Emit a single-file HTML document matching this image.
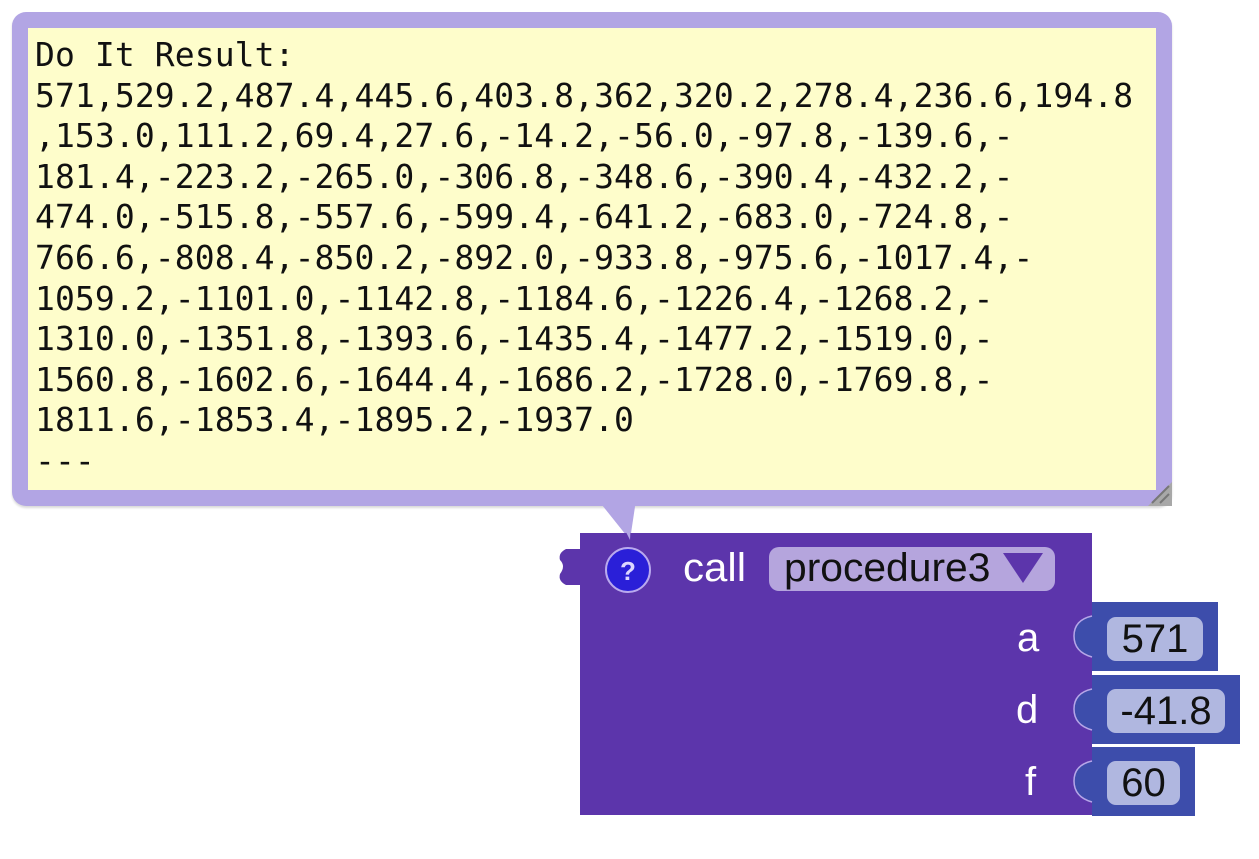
<!DOCTYPE html>
<html><head><meta charset="utf-8"><style>
body{margin:0;width:1259px;height:859px;background:#fff;position:relative;overflow:hidden;font-family:"Liberation Sans",sans-serif}
.bub{position:absolute;left:12px;top:12px;width:1160px;height:494px;background:#b2a5e4;border-radius:14px;box-shadow:0 2px 2px rgba(0,0,0,.15)}
.in{position:absolute;left:28px;top:28px;width:1128px;height:462px;background:#fefdcb}
.txt{position:absolute;left:35px;top:35px;font-family:"DejaVu Sans Mono",monospace;font-size:33px;line-height:40.6px;color:#111;white-space:pre;letter-spacing:0.1px}
.a{position:absolute}
.lbl{position:absolute;color:#fff;font-size:40px}
.fld{position:absolute;background:#b0b7e0;border-radius:9px;font-size:40px;color:#111;text-align:center;line-height:44px}
</style></head><body>
<div class="bub"></div>
<svg class="a" style="left:0;top:0" width="1259" height="600">
<polygon points="598,500 636,500 630,540" fill="#b2a5e4"/>
<polygon points="1172,482 1172,506 1148,506" fill="#a8a8a8"/>
<line x1="1152" y1="503" x2="1169" y2="486" stroke="#777" stroke-width="2"/>
<line x1="1160" y1="503" x2="1169" y2="494" stroke="#777" stroke-width="2"/>
</svg>
<div class="in"></div>
<div class="txt">Do It Result:
571,529.2,487.4,445.6,403.8,362,320.2,278.4,236.6,194.8
,153.0,111.2,69.4,27.6,-14.2,-56.0,-97.8,-139.6,-
181.4,-223.2,-265.0,-306.8,-348.6,-390.4,-432.2,-
474.0,-515.8,-557.6,-599.4,-641.2,-683.0,-724.8,-
766.6,-808.4,-850.2,-892.0,-933.8,-975.6,-1017.4,-
1059.2,-1101.0,-1142.8,-1184.6,-1226.4,-1268.2,-
1310.0,-1351.8,-1393.6,-1435.4,-1477.2,-1519.0,-
1560.8,-1602.6,-1644.4,-1686.2,-1728.0,-1769.8,-
1811.6,-1853.4,-1895.2,-1937.0
---</div>
<svg class="a" style="left:0;top:0" width="1259" height="859">
<rect x="580" y="533" width="512" height="282" fill="#5c35ab"/>
<path d="M580,549 L566,549 Q558,553 560,560 Q566,566 560,574 Q558,581 566,585 L580,585 Z" fill="#5c35ab"/>
<polygon points="610,500 632,500 630,540" fill="#b2a5e4"/>
<rect x="1092" y="602" width="126" height="69" fill="#3d4dab"/>
<rect x="1092" y="675" width="148" height="69" fill="#3d4dab"/>
<rect x="1092" y="747" width="103" height="69" fill="#3d4dab"/>
<g fill="#3d4dab" stroke="#b6a6e8" stroke-width="1.5">
<path d="M1092,616 Q1074,620 1074,636 Q1074,652 1092,657"/>
<path d="M1092,689 Q1074,693 1074,709 Q1074,725 1092,730"/>
<path d="M1092,761 Q1074,765 1074,781 Q1074,797 1092,802"/>
</g>
<circle cx="628" cy="570" r="22" fill="#2a1fd8" stroke="#b9a9ee" stroke-width="2"/>
<text x="628" y="580" fill="#dcd6ff" font-size="26" font-weight="bold" text-anchor="middle" font-family="Liberation Sans">?</text>
<rect x="769" y="547" width="286" height="44" rx="10" fill="#b5a5dd"/>
<polygon points="1003,553 1043,553 1023,583" fill="#5c35ab"/>
</svg>
<div class="lbl" style="left:683px;top:546px;transform:scaleX(1.05);transform-origin:left">call</div>
<div class="a" style="left:784px;top:546px;font-size:40px;color:#111;transform:scaleX(1.02);transform-origin:left">procedure3</div>
<div class="lbl" style="left:1017px;top:616px">a</div>
<div class="lbl" style="left:1016px;top:688px">d</div>
<div class="lbl" style="left:1025px;top:760px">f</div>
<div class="fld" style="left:1107px;top:617px;width:96px;height:44px">571</div>
<div class="fld" style="left:1107px;top:689px;width:118px;height:44px">-41.8</div>
<div class="fld" style="left:1107px;top:761px;width:73px;height:44px">60</div>
</body></html>
